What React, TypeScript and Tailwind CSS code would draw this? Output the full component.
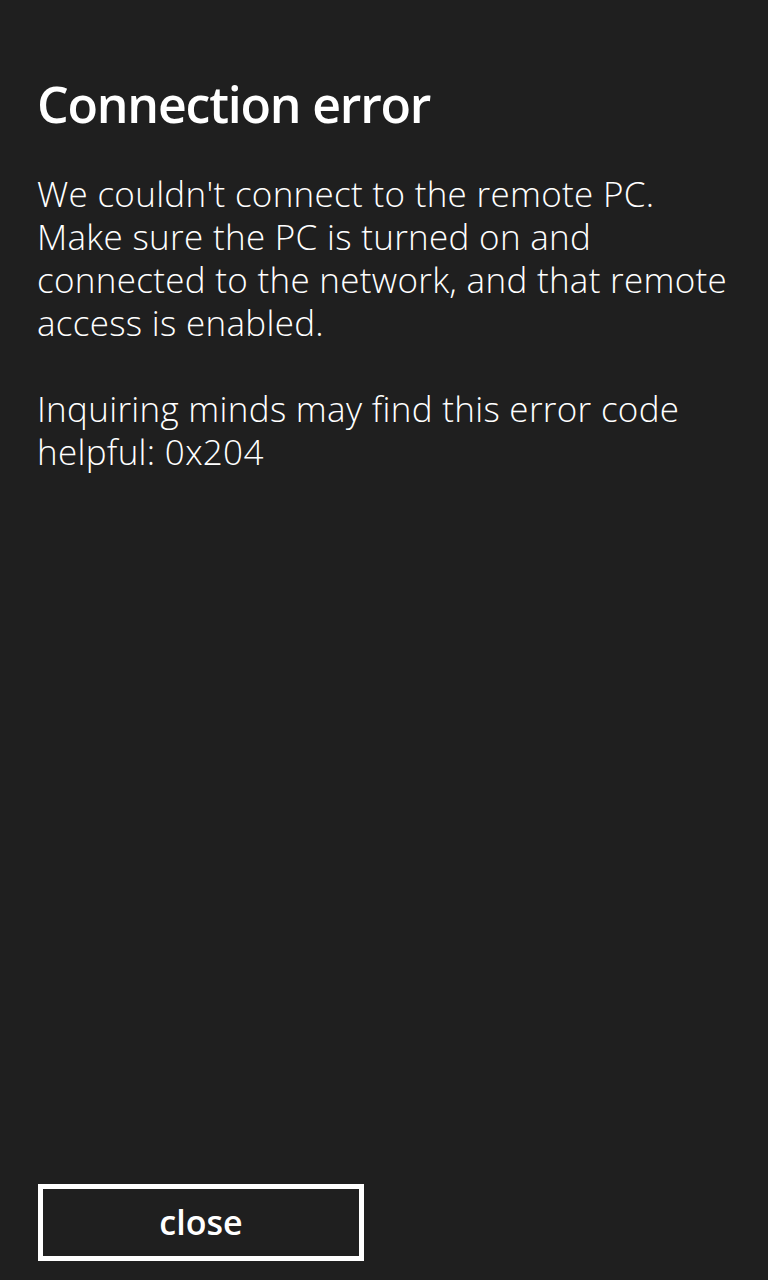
export default function App() {
  return (
    <div className="flex h-[1280px] w-[768px] flex-col bg-[#1f1f1f] text-white" style={{ fontFamily: '"Open Sans", "Noto Sans", sans-serif' }}>
      <div className="flex-1 pl-[37px] pr-[20px] pt-[74px]">
        <h1 className="text-[50px] font-semibold leading-[60px] tracking-[-1.2px]">Connection error</h1>
        <div className="mt-[38px] text-[35px] font-light leading-[43px] tracking-[0.3px]">
          <p>
            We couldn't connect to the remote PC.
            <br />
            Make sure the PC is turned on and
            <br />
            connected to the network, and that remote
            <br />
            access is enabled.
          </p>
          <p className="mt-[43px]">
            Inquiring minds may find this error code
            <br />
            helpful: 0x204
          </p>
        </div>
      </div>
      <div className="pb-[19px] pl-[38px]">
        <button className="h-[77px] w-[326px] border-[5px] border-white text-[34px] font-semibold text-white">
          close
        </button>
      </div>
    </div>
  );
}
